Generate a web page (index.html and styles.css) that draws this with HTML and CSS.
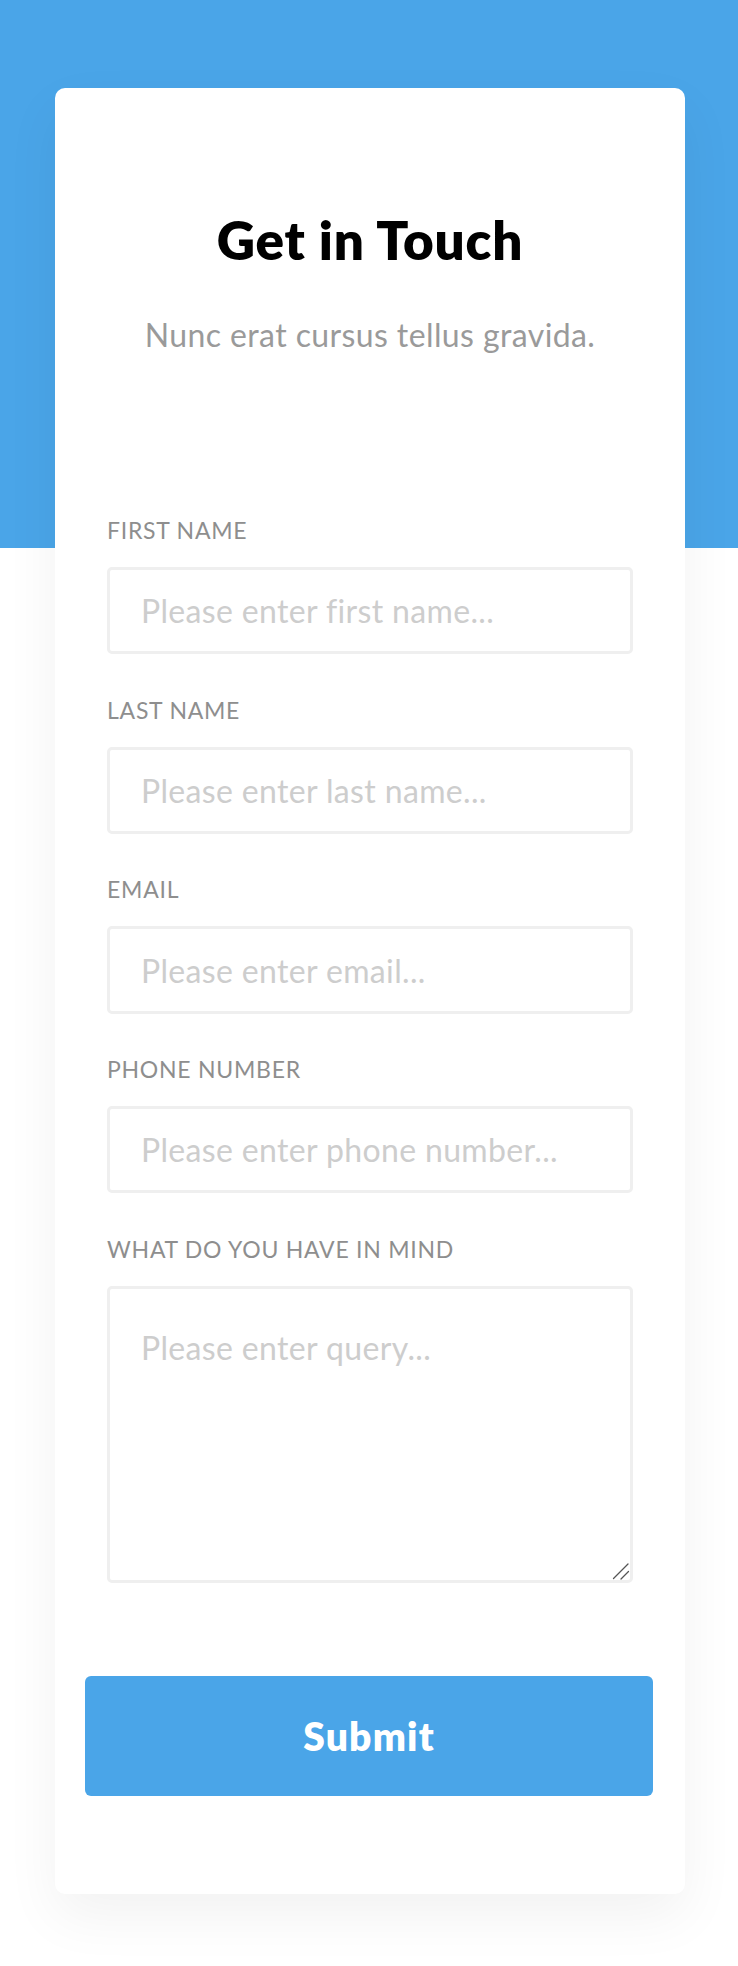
FILE: index.html
```html
<!DOCTYPE html>
<html lang="en">
<head>
<meta charset="utf-8">
<title>Get in Touch</title>
<link rel="stylesheet" href="styles.css">
</head>
<body>
<div class="page">
  <div class="card">
    <h1 class="title">Get in Touch</h1>
    <p class="subtitle">Nunc erat cursus tellus gravida.</p>
    <form class="form">
      <div class="fields">
        <label class="field">
          <span class="label">FIRST NAME</span>
          <input class="input" type="text" placeholder="Please enter first name...">
        </label>
        <label class="field">
          <span class="label">LAST NAME</span>
          <input class="input" type="text" placeholder="Please enter last name...">
        </label>
        <label class="field">
          <span class="label">EMAIL</span>
          <input class="input" type="email" placeholder="Please enter email...">
        </label>
        <label class="field">
          <span class="label">PHONE NUMBER</span>
          <input class="input" type="tel" placeholder="Please enter phone number...">
        </label>
        <label class="field">
          <span class="label">WHAT DO YOU HAVE IN MIND</span>
          <span class="textarea-wrap">
            <textarea class="input textarea" placeholder="Please enter query..."></textarea>
            <svg class="grip" width="18" height="18" viewBox="0 0 18 18" aria-hidden="true">
              <line x1="1.5" y1="16.5" x2="16" y2="2" stroke="#555" stroke-width="1.3" stroke-linecap="round"/>
              <line x1="9" y1="17" x2="16.5" y2="9.5" stroke="#555" stroke-width="1.3" stroke-linecap="round"/>
            </svg>
          </span>
        </label>
      </div>
      <div class="actions">
        <button class="submit" type="button">Submit</button>
      </div>
    </form>
  </div>
</div>
</body>
</html>
```

FILE: styles.css
```css
* {
  box-sizing: border-box;
}

html, body {
  margin: 0;
  padding: 0;
}

body {
  font-family: "Lato", "Noto Sans", sans-serif;
  background: linear-gradient(to bottom, #4aa5e8 0, #4aa5e8 548px, #ffffff 548px);
  min-height: 1966px;
}

.page {
  padding: 88px 53px 70px 55px;
}

.card {
  background: #ffffff;
  border-radius: 10px;
  box-shadow: 0 22px 55px rgba(0, 0, 0, 0.055);
  padding: 120px 0 98px;
  display: flex;
  flex-direction: column;
}

.title {
  margin: 0;
  font-size: 53px;
  line-height: 1.2;
  font-weight: 800;
  letter-spacing: 0.8px;
  color: #000000;
  text-align: center;
}

.subtitle {
  margin: 44px 0 0;
  font-size: 32px;
  line-height: 1.2;
  font-weight: 400;
  letter-spacing: 0.4px;
  color: #9a9a9a;
  text-align: center;
}

.form {
  margin: 163px 0 0;
  display: flex;
  flex-direction: column;
}

.fields {
  padding: 0 52px;
  display: flex;
  flex-direction: column;
  gap: 42.3px;
}

.field {
  display: flex;
  flex-direction: column;
  gap: 22.5px;
}

.label {
  font-size: 23px;
  line-height: 1.2;
  color: #8e8e8e;
  letter-spacing: 0.75px;
}

.input {
  display: block;
  width: 100%;
  height: 87.3px;
  padding: 0 31px;
  border: 3px solid #efefef;
  border-radius: 5px;
  background: #ffffff;
  font-family: inherit;
  font-size: 32px;
  line-height: 1.2;
  letter-spacing: 0.35px;
  color: #333333;
  outline: none;
}

.input::placeholder {
  color: #cdcdcd;
  opacity: 1;
}

.textarea-wrap {
  position: relative;
  display: block;
}

.textarea {
  height: 297.5px;
  padding: 40px 31px;
  resize: none;
}

.grip {
  position: absolute;
  right: 3px;
  bottom: 3px;
  pointer-events: none;
}

.actions {
  padding: 0 32px 0 30px;
  margin-top: 92.7px;
}

.submit {
  display: block;
  width: 100%;
  height: 120px;
  border: 0;
  border-radius: 6px;
  background: #4aa5e8;
  color: #ffffff;
  font-family: inherit;
  font-size: 39px;
  font-weight: 800;
  line-height: 1.2;
  letter-spacing: 1.2px;
  cursor: pointer;
}
```
